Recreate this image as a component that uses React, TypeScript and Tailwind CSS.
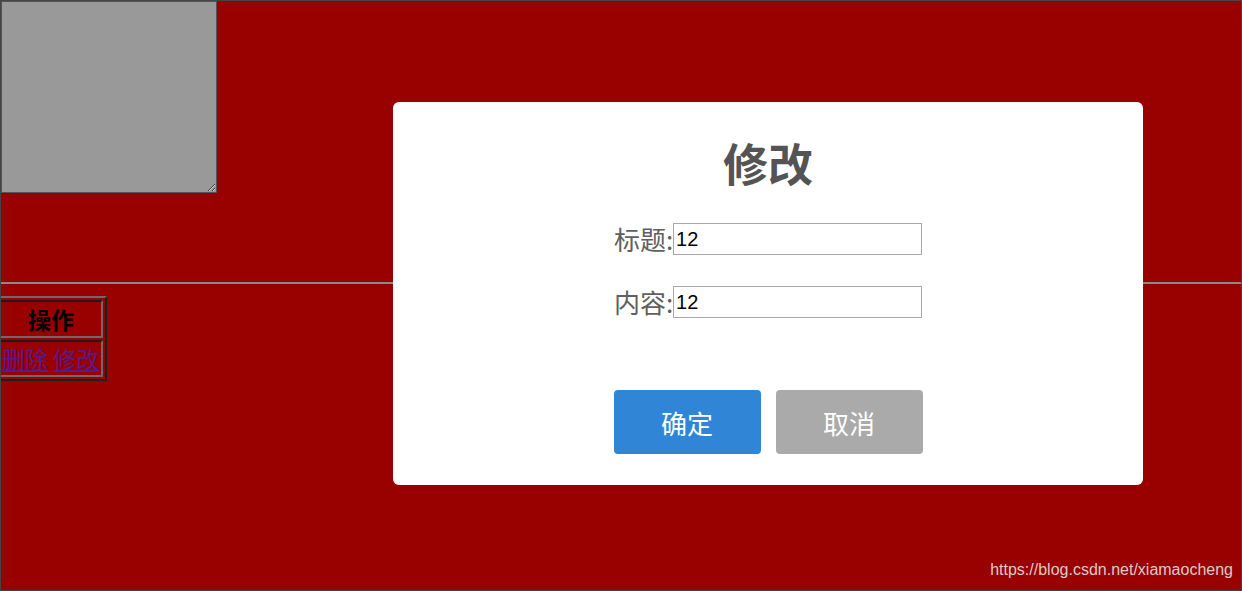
import React, { useState } from 'react';

const cjk = "font-['Microsoft_YaHei','Noto_Sans_CJK_SC',sans-serif]";

const EditDialog = ({ title, content }: { title: string; content: string }) => {
  const [t, setT] = useState(title);
  const [c, setC] = useState(content);

  return (
    <div className="absolute left-[392px] top-[101px] w-[750px] h-[383px] bg-white rounded-[6px] flex flex-col items-center">
      <h2 className={`${cjk} pt-[36px] text-[45px] leading-[50px] font-bold text-[#545454]`}>修改</h2>

      <div className="mt-[35px] flex items-center">
        <span className={`${cjk} text-[26px] leading-[32px] text-[#5f5f5f]`}>标题:</span>
        <input
          value={t}
          onChange={(e) => setT(e.target.value)}
          className="w-[249px] h-[32px] border border-[#a9a9a9] px-[2px] text-[20px] text-black font-['Liberation_Sans',Arial,sans-serif] outline-none"
        />
      </div>

      <div className="mt-[31px] flex items-center">
        <span className={`${cjk} text-[26px] leading-[32px] text-[#5f5f5f]`}>内容:</span>
        <input
          value={c}
          onChange={(e) => setC(e.target.value)}
          className="w-[249px] h-[32px] border border-[#a9a9a9] px-[2px] text-[20px] text-black font-['Liberation_Sans',Arial,sans-serif] outline-none"
        />
      </div>

      <div className="mt-[72px] flex gap-[15px]">
        <button className={`${cjk} w-[147px] h-[64px] rounded-[4px] bg-[#3085d6] text-white text-[26px]`}>确定</button>
        <button className={`${cjk} w-[147px] h-[64px] rounded-[4px] bg-[#aaaaaa] text-white text-[26px]`}>取消</button>
      </div>
    </div>
  );
};

const App = () => {
  return (
    <div className="relative w-full h-[591px] bg-[#990000] border border-[#454545] overflow-hidden">
      <textarea className="block w-[216px] h-[192px] bg-[#999999] border border-[#555555] resize" />

      <hr className="mt-[89px] border-0 h-[2px] bg-[#8a8a8a]" />

      <table className={`${cjk} mt-[12px] ml-[-6px] border-separate border-spacing-[2px] border-2 border-t-[#6b6b6b] border-l-[#6b6b6b] border-r-[#1c1c1c] border-b-[#1c1c1c]`}>
        <tbody>
          <tr>
            <th className="border-2 border-t-[#1c1c1c] border-l-[#1c1c1c] border-r-[#6b6b6b] border-b-[#6b6b6b] p-px text-[23px] leading-[32px] font-bold text-black">
              操作
            </th>
          </tr>
          <tr>
            <td className="border-2 border-t-[#1c1c1c] border-l-[#1c1c1c] border-r-[#6b6b6b] border-b-[#6b6b6b] p-px pr-[2px] text-[23px] leading-[31px] whitespace-nowrap">
              <a href="#" className="text-[#551a8b] underline">删除</a>{' '}
              <a href="#" className="text-[#551a8b] underline">修改</a>
            </td>
          </tr>
        </tbody>
      </table>

      <EditDialog title="12" content="12" />

      <span className="absolute right-[8px] bottom-[8px] text-[16px] text-[#dccaca] font-['Liberation_Sans',Arial,sans-serif]">
        https://blog.csdn.net/xiamaocheng
      </span>
    </div>
  );
};

export default App;
